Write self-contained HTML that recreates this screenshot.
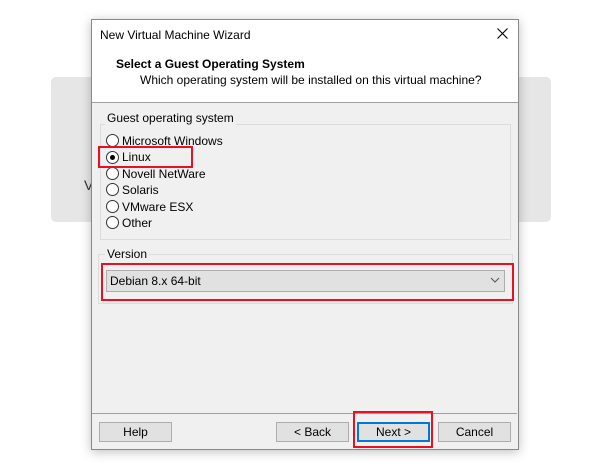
<!DOCTYPE html><html><head><style>
body{margin:0;width:603px;height:474px;background:#fff;position:relative;overflow:hidden;font-family:"Liberation Sans",sans-serif;font-size:12px;color:#000}
.a{position:absolute}
.rad{position:absolute;left:106px;width:11px;height:11px;border:1px solid #333;border-radius:50%;background:#fff}
.lbl{position:absolute;left:122px}
.btn{position:absolute;top:422px;width:71px;height:18px;border:1px solid #adadad;background:#e1e1e1;text-align:center;line-height:18px}
</style></head><body>
<div class="a" style="left:51px;top:77px;width:500px;height:145px;background:#e6e6e6;border-radius:5px"></div>
<div class="a" style="left:84px;top:177px;font-size:14px;color:#333">V</div>
<div class="a" style="left:91px;top:19px;width:426px;height:429px;background:#f0f0f0;border:1px solid #888;box-shadow:0 2px 10px rgba(0,0,0,.25)">
<div class="a" style="left:0;top:0;width:426px;height:82px;background:#fff;border-bottom:1px solid #a0a0a0"></div>
</div>
<div class="a" style="left:100px;top:28px;font-size:12px">New Virtual Machine Wizard</div>
<svg class="a" style="left:497px;top:28px" width="11" height="11"><path d="M0.5 0.5L10.5 10.5M10.5 0.5L0.5 10.5" stroke="#000" stroke-width="1.1"/></svg>
<div class="a" style="left:116px;top:57px;font-weight:bold">Select a Guest Operating System</div>
<div class="a" style="left:140px;top:73px">Which operating system will be installed on this virtual machine?</div>
<div class="a" style="left:100px;top:124px;width:409px;height:114px;border:1px solid #dcdcdc"></div>
<div class="a" style="left:105px;top:111px;background:#f0f0f0;padding:0 2px">Guest operating system</div>
<div class="rad" style="top:134px"></div><div class="lbl" style="top:134px">Microsoft Windows</div>
<div class="rad" style="top:151px"></div><div class="a" style="left:110px;top:155px;width:5px;height:5px;border-radius:50%;background:#000"></div><div class="lbl" style="top:150px">Linux</div>
<div class="rad" style="top:167px"></div><div class="lbl" style="top:167px">Novell NetWare</div>
<div class="rad" style="top:183px"></div><div class="lbl" style="top:183px">Solaris</div>
<div class="rad" style="top:200px"></div><div class="lbl" style="top:200px">VMware ESX</div>
<div class="rad" style="top:216px"></div><div class="lbl" style="top:216px">Other</div>
<div class="a" style="left:98px;top:146px;width:91px;height:18px;border:2px solid #e81123"></div>
<div class="a" style="left:98px;top:254px;width:413px;height:48px;border:1px solid #dcdcdc"></div>
<div class="a" style="left:105px;top:247px;background:#f0f0f0;padding:0 2px">Version</div>
<div class="a" style="left:106px;top:270px;width:397px;height:20px;background:#e1e1e1;border:1px solid #adadad"></div>
<div class="a" style="left:110px;top:274px">Debian 8.x 64-bit</div>
<svg class="a" style="left:490px;top:277px" width="10" height="6"><path d="M1 1L5 5L9 1" fill="none" stroke="#555"/></svg>
<div class="a" style="left:101px;top:263px;width:409px;height:34px;border:2px solid #e81123"></div>
<div class="a" style="left:92px;top:413px;width:425px;height:1px;background:#a0a0a0"></div>
<div class="btn" style="left:99px">Help</div>
<div class="btn" style="left:276px">&lt; Back</div>
<div class="btn" style="left:357px;border:2px solid #0078d7;width:69px;height:16px;line-height:16px">Next &gt;</div>
<div class="btn" style="left:438px">Cancel</div>
<div class="a" style="left:353px;top:411px;width:76px;height:33px;border:2px solid #e81123"></div>
</body></html>
